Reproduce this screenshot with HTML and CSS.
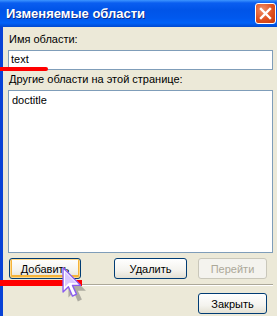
FILE: index.html
```html
<!DOCTYPE html>
<html lang="ru">
<head>
    <meta charset="UTF-8">
    <title>Изменяемые области</title>
    <link rel="stylesheet" href="styles.css">
</head>
<body>
    <div class="window">
        <div class="titlebar">
            <span class="title">Изменяемые области</span>
            <button class="close">
                <svg width="13" height="13" viewBox="0 0 13 13"><path d="M2 2 L11 11 M11 2 L2 11" stroke="#fff" stroke-width="2.4" stroke-linecap="square"/></svg>
            </button>
        </div>
        <div class="content">
            <div class="label">Имя области:</div>
            <div class="field">text</div>
            <div class="label second">Другие области на этой странице:</div>
            <div class="list">doctitle</div>
            <div class="buttons">
                <button class="btn btn-add">Добавить</button>
                <button class="btn btn-del">Удалить</button>
                <button class="btn btn-go" disabled>Перейти</button>
            </div>
            <div class="sep"></div>
            <div class="bottom">
                <button class="btn btn-close">Закрыть</button>
            </div>
        </div>

        <!-- пометки поверх окна -->
        <div class="mark mark-top"></div>
        <div class="mark mark-bottom"></div>
        <svg class="cursor" width="35" height="38" viewBox="0 0 26 28">
            <path d="M4 4 L4 22 L8 18 L11 25 L14 23.5 L11 17 L17 17 Z" fill="rgba(60,60,60,0.35)" transform="translate(3 2)"/>
            <path d="M3 2 L3 20 L7 16 L10 23 L13 21.5 L10 15 L16 15 Z" fill="#fff" stroke="#8a5cf0" stroke-width="1" stroke-linejoin="round"/>
            <path d="M4.5 5 L4.5 16 L7.5 13 L13 13.5 Z" fill="#d9c8ff"/>
        </svg>
    </div>
</body>
</html>
```

FILE: styles.css
```css
*{
    margin: 0px;
    padding: 0px;
    box-sizing: border-box;
}
body{
    width: 277px;
    height: 316px;
    overflow: hidden;
    font-family: "Liberation Sans", Arial, sans-serif;
    font-size: 11px;
    color: black;
}
.window{
    position: relative;
    height: 316px;
    background-color: #ece9d8;
    border-left: 3px solid #0842d6;
}
.titlebar{
    display: flex;
    align-items: center;
    height: 27px;
    margin-left: -3px;
    padding: 0px 1px 0px 6px;
    background: linear-gradient(#3d95ff 0px, #0a5ef0 3px, #0054e8 10px, #0058ee 18px, #0062f8 23px, #0049d0 27px);
}
.title{
    flex: 1;
    color: white;
    font-weight: bold;
    font-size: 13px;
    text-shadow: 1px 1px 0px #0a2c8c;
}
.close{
    display: flex;
    align-items: center;
    justify-content: center;
    width: 21px;
    height: 21px;
    border: 1px solid white;
    border-radius: 3px;
    background: radial-gradient(circle at 35% 30%, #f0906a, #e0501f 55%, #c3380e);
}
.content{
    padding: 6px 4px 0px 5px;
}
.label{
    height: 13px;
    line-height: 13px;
    padding-left: 1px;
}
.label.second{
    margin-top: 3px;
}
.field, .list{
    margin-top: 4px;
    background-color: white;
    border: 1px solid #7f9db9;
    padding: 0px 2px;
}
.field{
    height: 20px;
    line-height: 16px;
}
.list{
    height: 163px;
    line-height: 14px;
    padding: 2px 3px;
}
.buttons{
    display: flex;
    margin-top: 5px;
    padding-left: 1px;
}
.btn{
    height: 21px;
    font-family: "Liberation Sans", Arial, sans-serif;
    font-size: 11px;
    color: black;
    border: 1px solid #003c74;
    border-radius: 3px;
    background: linear-gradient(#ffffff, #f4f3ee 60%, #e3e0d3);
}
.btn-add{
    width: 72px;
    box-shadow: inset 0px 0px 0px 1px #ffd98a, inset 0px -1px 0px 2px #f5b33a;
}
.btn-del{
    width: 73px;
    margin-left: 33px;
}
.btn-go{
    width: 69px;
    margin-left: 11px;
    color: #aca899;
    border-color: #c9c7ba;
    background: #f4f3ee;
}
.sep{
    margin-top: 5px;
    height: 2px;
    border-top: 1px solid #aca899;
    border-bottom: 1px solid white;
}
.bottom{
    display: flex;
    justify-content: flex-end;
    margin-top: 7px;
    padding-right: 6px;
}
.btn-close{
    width: 69px;
}
.mark{
    position: absolute;
    background-color: #ff0000;
}
.mark-top{
    left: -3px;
    top: 67px;
    width: 48px;
    height: 4px;
    border-radius: 0px 3px 3px 0px;
}
.mark-bottom{
    left: -3px;
    top: 280px;
    width: 82px;
    height: 6px;
}
.cursor{
    position: absolute;
    left: 56px;
    top: 265px;
}
```
